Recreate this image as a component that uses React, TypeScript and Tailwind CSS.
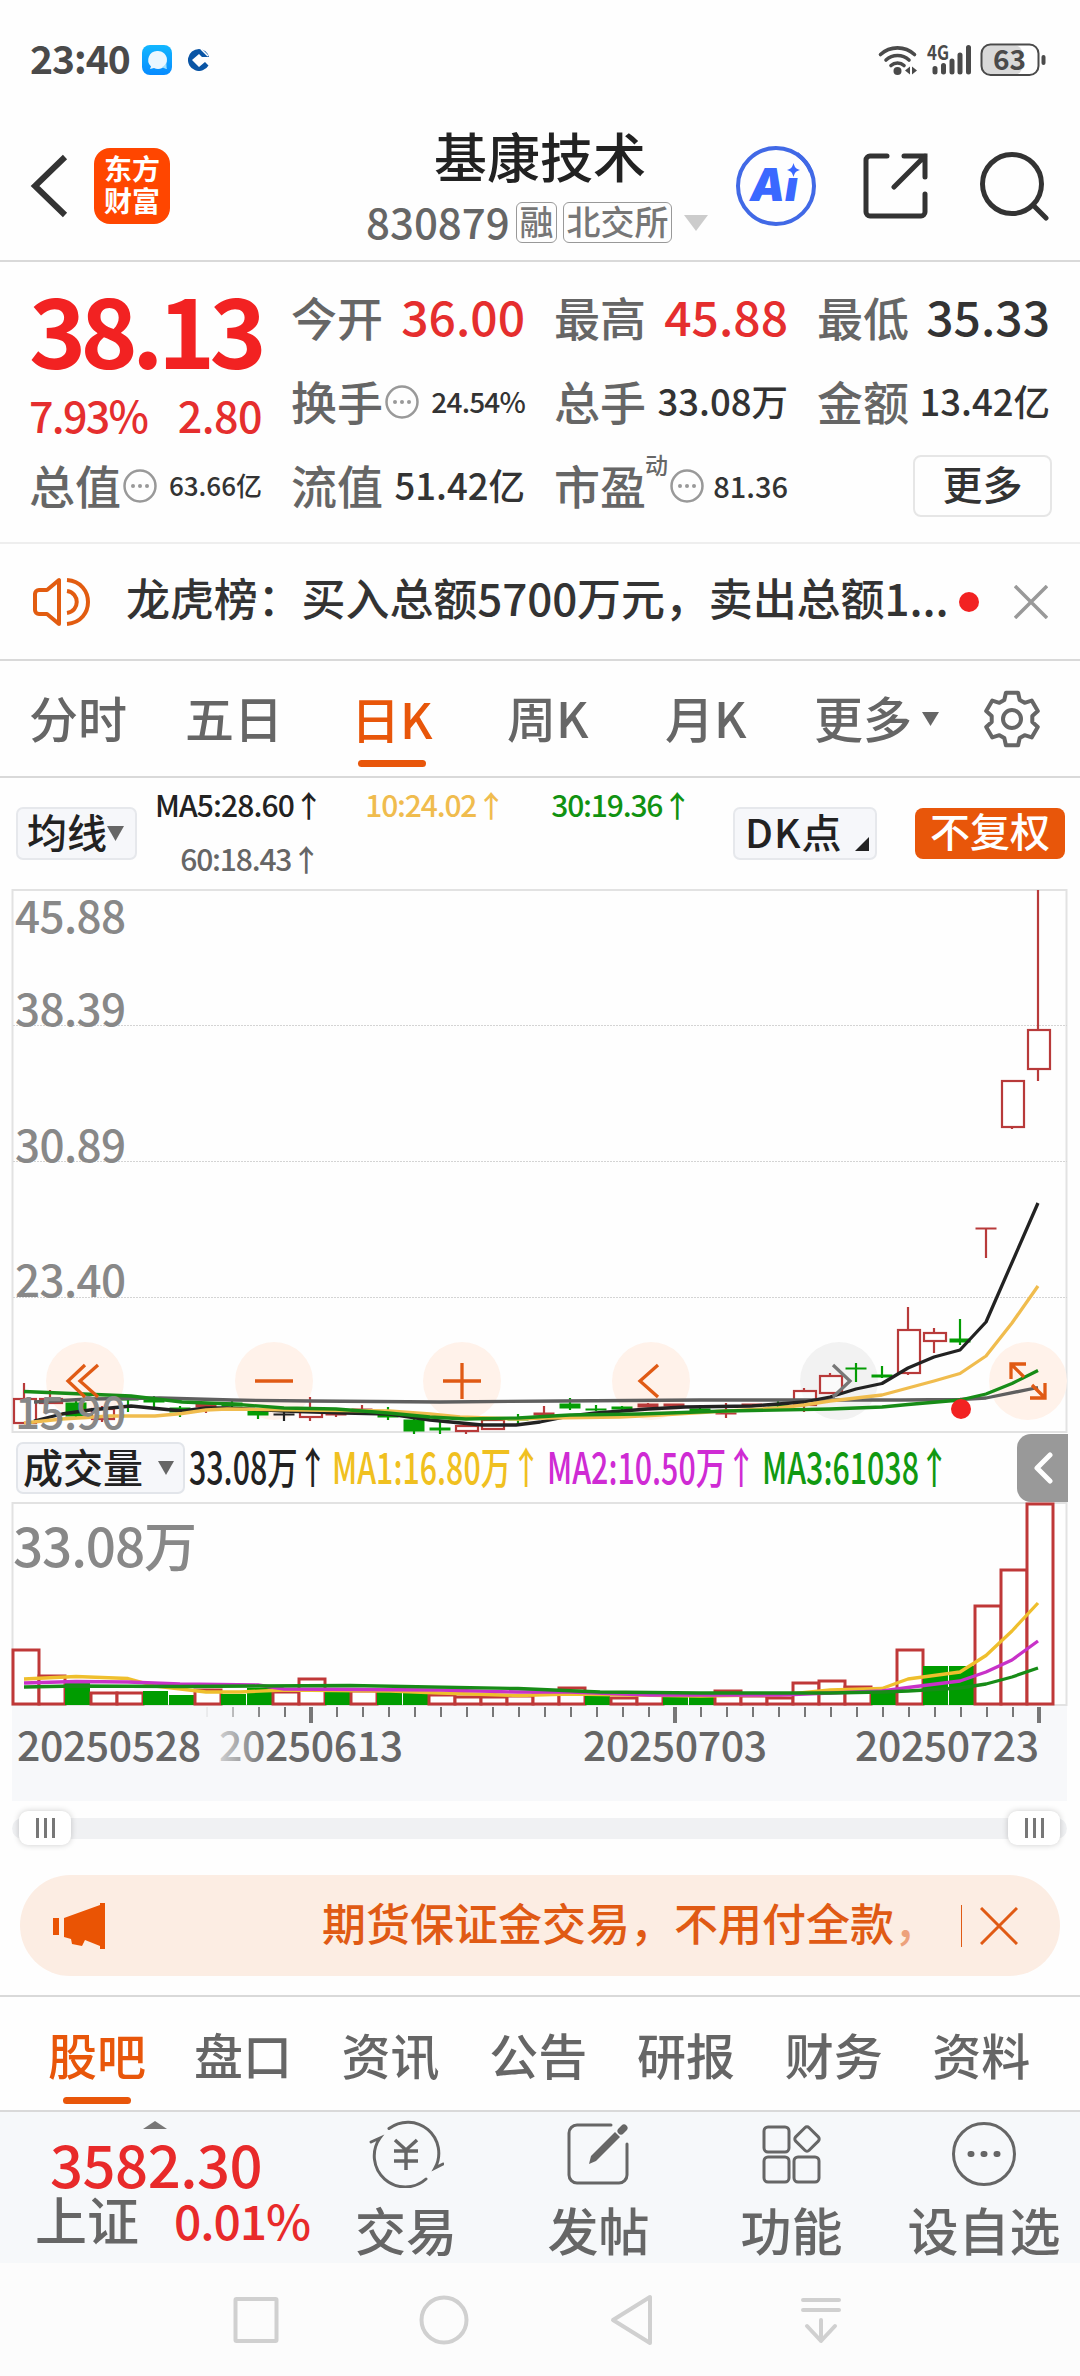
import type { ReactNode } from "react";

type Point = [number, number];

const STEP = 26;
const FIRST_X = 24;
const RED = "#b83a3a";
const GREEN = "#049c04";

// kind, body top, body bottom, wick top, wick bottom
const candles: [string, number, number, number, number][] = [
  ["r", 1399, 1423, 1383, 1423],
  ["r", 1399, 1403, 1390, 1403],
  ["g", 1403, 1416, 1400, 1417],
  ["r", 1409, 1419, 1406, 1422],
  ["g", 1399, 1400, 1397, 1412],
  ["g", 1400, 1402, 1396, 1410],
  ["g", 1408, 1412, 1406, 1417],
  ["r", 1404, 1407, 1402, 1413],
  ["g", 1403, 1406, 1401, 1411],
  ["g", 1411, 1415, 1409, 1419],
  ["k", 1414, 1415, 1409, 1421],
  ["r", 1412, 1417, 1397, 1421],
  ["r", 1414, 1415, 1410, 1417],
  ["r", 1409, 1410, 1405, 1412],
  ["g", 1411, 1417, 1407, 1420],
  ["g", 1420, 1431, 1418, 1436],
  ["g", 1428, 1430, 1421, 1436],
  ["r", 1426, 1431, 1424, 1435],
  ["r", 1420, 1429, 1420, 1429],
  ["g", 1418, 1420, 1414, 1423],
  ["r", 1413, 1415, 1406, 1415],
  ["g", 1404, 1408, 1398, 1410],
  ["g", 1409, 1410, 1405, 1411],
  ["g", 1407, 1409, 1406, 1411],
  ["r", 1404, 1407, 1403, 1407],
  ["r", 1404, 1406, 1404, 1409],
  ["g", 1409, 1411, 1408, 1411],
  ["r", 1413, 1414, 1403, 1418],
  ["r", 1404, 1405, 1404, 1407],
  ["g", 1404, 1406, 1401, 1407],
  ["r", 1391, 1405, 1388, 1412],
  ["r", 1376, 1393, 1373, 1393],
  ["g", 1368, 1369, 1363, 1382],
  ["g", 1375, 1377, 1366, 1378],
  ["r", 1330, 1373, 1307, 1375],
  ["r", 1333, 1341, 1328, 1353],
  ["g", 1339, 1342, 1319, 1345],
  ["r", 1228, 1229, 1228, 1258],
  ["r", 1081, 1127, 1081, 1129],
  ["r", 1030, 1069, 890, 1081],
];

const volumes: [string, number][] = [
  ["r", 1650], ["r", 1676], ["g", 1683], ["r", 1693], ["r", 1693],
  ["g", 1691], ["g", 1695], ["r", 1690], ["g", 1694], ["g", 1688],
  ["r", 1692], ["r", 1679], ["g", 1692], ["r", 1691], ["g", 1692],
  ["g", 1691], ["r", 1695], ["r", 1697], ["r", 1697], ["r", 1696],
  ["r", 1694], ["r", 1688], ["g", 1693], ["r", 1698], ["r", 1694],
  ["g", 1697], ["g", 1696], ["r", 1691], ["r", 1696], ["r", 1698],
  ["r", 1683], ["r", 1681], ["r", 1687], ["g", 1692], ["r", 1650],
  ["g", 1666], ["g", 1666], ["r", 1606], ["r", 1570], ["r", 1504],
];

const priceLines: { color: string; points: Point[] }[] = [
  {
    color: "#5f5f5f",
    points: [[34, 1402], [90, 1399], [160, 1398], [232, 1400], [310, 1401], [440, 1402], [560, 1401], [700, 1400], [900, 1400], [960, 1399.5], [986, 1398], [1038, 1387.5]],
  },
  {
    color: "#222222",
    points: [[34, 1421], [62, 1414], [90, 1410], [131, 1406], [182, 1411], [206, 1408], [227, 1408], [284, 1411], [344, 1413], [389, 1414], [430, 1420], [482, 1425], [516, 1425], [540, 1422], [570, 1416], [596, 1413], [622, 1411], [648, 1409], [685, 1407], [752, 1406], [804, 1402], [830, 1397], [856, 1389], [882, 1383.5], [908, 1368], [934, 1357], [960, 1350], [986, 1322], [1038, 1203]],
  },
  {
    color: "#f0bc4e",
    points: [[24, 1423], [62, 1419], [110, 1416], [155, 1416], [182, 1413.5], [206, 1410], [227, 1409], [300, 1410], [389, 1411], [430, 1414], [460, 1417], [518, 1419], [545, 1418], [620, 1417], [660, 1415], [726, 1411], [778, 1408], [804, 1405], [830, 1401], [882, 1395], [908, 1388], [934, 1381], [960, 1373.5], [986, 1356], [1012, 1323], [1038, 1286]],
  },
  {
    color: "#178c17",
    points: [[24, 1391.5], [131, 1396], [182, 1402], [232, 1404], [284, 1408], [336, 1409], [388, 1413], [430, 1417], [466, 1419], [518, 1418], [570, 1415], [640, 1414], [726, 1411], [830, 1409], [882, 1407], [908, 1404.5], [960, 1400], [986, 1394], [1012, 1383.5], [1038, 1370.5]],
  },
];

const volumeLines: { color: string; points: Point[] }[] = [
  {
    color: "#efbf2d",
    points: [[24, 1679], [76, 1676.5], [128, 1678.5], [155, 1686], [206, 1692], [240, 1692], [284, 1690], [390, 1691], [440, 1693], [518, 1695.5], [570, 1694], [700, 1696], [780, 1695], [830, 1690], [882, 1688.5], [908, 1679], [960, 1672], [986, 1655.5], [1012, 1631], [1038, 1603]],
  },
  {
    color: "#c832c8",
    points: [[24, 1683], [76, 1681.5], [128, 1682], [180, 1684], [258, 1685], [284, 1689], [440, 1690], [518, 1692], [570, 1692], [650, 1695], [780, 1695], [882, 1691], [908, 1687.5], [960, 1681], [986, 1672], [1012, 1660], [1038, 1641]],
  },
  {
    color: "#178c17",
    points: [[24, 1687], [76, 1686], [180, 1686.5], [258, 1686], [350, 1685.5], [518, 1688.5], [600, 1692], [700, 1693], [830, 1693], [882, 1692], [908, 1691], [960, 1688], [986, 1684], [1012, 1677], [1038, 1668]],
  },
];

const toPath = (points: Point[]) => "M" + points.map((p) => p.join(" ")).join("L");

function gearPath() {
  const pts: string[] = [];
  for (let i = 0; i < 6; i++) {
    const steps: Point[] = [[-22, 20.5], [-13, 27], [13, 27], [22, 20.5]];
    for (const [offset, r] of steps) {
      const a = ((i * 60 + offset - 90) * Math.PI) / 180;
      pts.push(`${(30 + r * Math.cos(a)).toFixed(1)} ${(30 + r * Math.sin(a)).toFixed(1)}`);
    }
  }
  return "M" + pts.join("L") + "Z";
}

function Down({ className }: { className: string }) {
  return (
    <svg viewBox="0 0 10 8" preserveAspectRatio="none" className={className} fill="currentColor">
      <path d="M0 0H10L5 8Z" />
    </svg>
  );
}

function Dots() {
  return (
    <svg viewBox="0 0 34 34" className="ml-[2px] h-[34px] w-[34px] shrink-0 text-[#999]" fill="currentColor">
      <circle cx="17" cy="17" r="15.5" fill="none" stroke="currentColor" strokeWidth="2.5" />
      <circle cx="10" cy="17" r="2" />
      <circle cx="17" cy="17" r="2" />
      <circle cx="24" cy="17" r="2" />
    </svg>
  );
}

function StatusBar() {
  return (
    <div className="flex h-[120px] items-center pl-[30px] pr-[33px] text-[#4a4a4a]">
      <span className="pb-[5px] text-[39px] font-bold leading-none tracking-[-1px]">23:40</span>
      <svg viewBox="0 0 30 30" className="ml-3 h-[30px] w-[30px]">
        <defs>
          <linearGradient id="chat" x1="0" y1="0" x2="0" y2="1">
            <stop offset="0" stopColor="#12b7ff" />
            <stop offset="1" stopColor="#078bff" />
          </linearGradient>
        </defs>
        <rect width="30" height="30" rx="8" fill="url(#chat)" />
        <path d="M15 6a9 9 0 0 0-6 15.500L8 24l4-1a9 9 0 1 0 3-17Z" fill="#eaf7ff" />
        <path d="M20 22c2-.5 3.500-2 4-4 1 2 0 4 1 6-2-.2-3-1-5-2Z" fill="#9fe0ff" />
      </svg>
      <svg viewBox="0 0 22 22" className="ml-4 h-[22px] w-[22px]">
        <path d="M11 0a11 11 0 1 0 9.500 16.500L17 13l-6 5-7-7 7-6 3 3h7A11 11 0 0 0 11 0Z" fill="#0a55a5" />
        <path d="M11 8l3 3-3 3-3-3Z" fill="#fff" />
        <path d="M13 0l7 7" stroke="#fff" strokeWidth="1.500" />
      </svg>
      <svg viewBox="0 0 170 34" className="ml-auto h-[34px] w-[170px] overflow-visible" fill="none" stroke="currentColor">
        <g strokeWidth="3.600" strokeLinecap="round">
          <path d="M3.500 11.500a25 25 0 0 1 34 0" />
          <path d="M9 17a17 17 0 0 1 23 0" />
          <path d="M14 22.500a9.500 9.500 0 0 1 13 0" />
        </g>
        <circle cx="20.500" cy="28" r="4" fill="currentColor" stroke="none" />
        <path d="M33 23.500v8l-5-4ZM35 23.500v8l5-4Z" fill="currentColor" stroke="none" />
        <text x="50" y="16.500" fontSize="20" fontWeight="700" fill="currentColor" stroke="none" textLength="22" lengthAdjust="spacingAndGlyphs">
          4G
        </text>
        <g strokeWidth="5" strokeLinecap="round">
          <path d="M58 25.500v3.500M66.500 22.500v6.500M75 18v11M83 12v17M91.500 4.500v24.500" />
        </g>
        <rect x="105" y="2.500" width="40" height="29" rx="7" fill="#d9d9d9" stroke="none" />
        <rect x="104.500" y="1.500" width="57" height="30.500" rx="9" strokeWidth="2" />
        <path d="M166.500 14v6" strokeWidth="4" strokeLinecap="round" />
        <text x="132.500" y="27" fontSize="28" fontWeight="700" textAnchor="middle" fill="currentColor" stroke="none">
          63
        </text>
      </svg>
    </div>
  );
}

function Header() {
  return (
    <header className="flex h-[142px] items-center border-b-2 border-[#d9d9d9] pb-[8px] pl-[28px] text-[#333]">
      <svg viewBox="0 0 40 64" className="h-16 w-10" fill="none" stroke="currentColor" strokeWidth="6" strokeLinecap="butt">
        <path d="M37 3L7 32l30 29" />
      </svg>
      <div className="ml-[26px] flex h-[76px] w-[76px] flex-col items-center justify-center rounded-[16px] bg-[#ff4600] pb-[5px] text-[28px] font-bold leading-[32px] text-white">
        <span>东方</span>
        <span>财富</span>
      </div>
      <div className="ml-[194px] flex w-[346px] shrink-0 flex-col">
        <h1 className="ml-[70px] text-[53px] font-medium leading-[53px] text-[#222]">基康技术</h1>
        <div className="mt-[20px] flex h-[42px] items-center text-[#777]">
          <span className="ml-[2px] w-[150px] pb-1 text-[42px] leading-none text-[#666]">830879</span>
          <span className="flex h-[41px] w-[41px] shrink-0 items-center justify-center rounded-[6px] border-[1.500px] border-[#999] pb-1 text-[34px] leading-none">融</span>
          <span className="ml-[6px] flex h-[41px] w-[109px] shrink-0 items-center justify-center rounded-[6px] border-[1.500px] border-[#999] pb-1 text-[34px] leading-none">北交所</span>
          <Down className="ml-3 h-4 w-6 shrink-0 text-[#ccc]" />
        </div>
      </div>
      <svg viewBox="0 0 82 82" className="ml-[25px] h-[82px] w-[82px] shrink-0">
        <circle cx="41" cy="41" r="38" fill="none" stroke="#4169e6" strokeWidth="4" />
        <text x="15" y="56" fontFamily="Inter" fontWeight="900" fontStyle="italic" fontSize="46" fill="#3a68ff" textLength="48" lengthAdjust="spacingAndGlyphs">
          Ai
        </text>
        <path d="M50 16H66L69 30L66 33H49Z" fill="#fefefe" />
        <path d="M58.500 18c1.200 4.500 2.500 5.800 6.500 7c-4 1.200-5.300 2.500-6.500 7c-1.200-4.500-2.500-5.800-6.500-7c4-1.200 5.300-2.500 6.500-7Z" fill="#3a68ff" />
        <path d="M62 9A38 38 0 0 1 76 27" fill="none" stroke="#4169e6" strokeWidth="4" />
      </svg>
      <svg viewBox="0 0 66 66" className="ml-[46px] h-[66px] w-[66px] shrink-0" fill="none" stroke="currentColor" strokeWidth="5" strokeLinecap="round">
        <path d="M24 3H7a4 4 0 0 0-4 4V59a4 4 0 0 0 4 4H58a4 4 0 0 0 4-4V41" />
        <path d="M41 3H62V24M62 3L31 34" />
      </svg>
      <svg viewBox="0 0 70 70" className="ml-[50px] h-[70px] w-[70px] shrink-0" fill="none" stroke="currentColor" strokeWidth="5" strokeLinecap="round">
        <circle cx="33" cy="33" r="29.500" />
        <path d="M54 54L67 67" />
      </svg>
    </header>
  );
}

function Quote({ label, value, valueClass, extra }: { label: string; value: string; valueClass: string; extra?: ReactNode }) {
  return (
    <div className="flex items-center whitespace-nowrap leading-none">
      <span className="-ml-[1px] pb-[4px] text-[46px] text-[#666]">{label}</span>
      {extra}
      <span className={"ml-auto " + valueClass}>{value}</span>
    </div>
  );
}

function QuotePanel() {
  return (
    <section className="h-[282px] border-b-2 border-[#eee] px-[30px] pt-[14px]">
      <div className="grid grid-cols-[232px_233px_233px_232px] grid-rows-[84px_84px_84px] gap-x-[30px]">
        <div className="row-span-2 flex flex-col leading-none">
          <span className="-ml-[1px] mt-[3px] text-[97px] font-bold leading-[96px] tracking-[-5.700px] text-[#f22222]">38.13</span>
          <div className="mt-[18px] flex justify-between text-[43px] text-[#e52e2e]">
            <span className="-ml-[1px] tracking-[-1.700px]">7.93%</span>
            <span className="tracking-[-0.500px]">2.80</span>
          </div>
        </div>
        <Quote label="今开" value="36.00" valueClass="pb-[6px] text-[48px] text-[#e52e2e]" />
        <Quote label="最高" value="45.88" valueClass="pb-[6px] text-[48px] text-[#e52e2e]" />
        <Quote label="最低" value="35.33" valueClass="pb-[6px] text-[48px] text-[#333]" />
        <Quote label="换手" value="24.54%" valueClass="pb-[2px] text-[28px] tracking-[-0.800px] text-[#333]" extra={<Dots />} />
        <Quote label="总手" value="33.08万" valueClass="pb-[2px] text-[36.500px] text-[#333]" />
        <Quote label="金额" value="13.42亿" valueClass="pb-[2px] text-[36.500px] text-[#333]" />
        <Quote label="总值" value="63.66亿" valueClass="pb-[2px] text-[26px] text-[#333]" extra={<Dots />} />
        <Quote label="流值" value="51.42亿" valueClass="pb-[2px] text-[36.500px] text-[#333]" />
        <Quote
          label="市盈"
          value="81.36"
          valueClass="pb-[2px] text-[29px] text-[#333]"
          extra={
            <>
              <span className="-ml-[1px] self-start pt-[9px] text-[23px] text-[#666]">动</span>
              <Dots />
            </>
          }
        />
        <div className="-mr-[2px] ml-auto mt-[11px] flex h-[62px] w-[139px] items-center justify-center rounded-[8px] border-2 border-[#e6e6e6] pb-[6px] text-[40px] leading-none text-[#333]">
          更多
        </div>
      </div>
    </section>
  );
}

function NewsBar() {
  return (
    <div className="flex h-[117px] items-center border-b-2 border-[#d9d9d9] pl-[32px] text-[#333]">
      <svg viewBox="0 0 60 50" className="h-[50px] w-[60px] shrink-0 text-[#e25c10]" fill="none" stroke="currentColor" strokeWidth="4" strokeLinejoin="round">
        <path d="M27 3v44L15 37H7a4 4 0 0 1-4-4V17a4 4 0 0 1 4-4h8Z" />
        <path d="M35 3c28 2 28 42 0 44M35 14c13 2 13 20 0 22" />
      </svg>
      <span className="ml-[34px] w-[824px] whitespace-nowrap pb-[9px] text-[44px] leading-none tracking-[-0.100px]">龙虎榜：买入总额5700万元，卖出总额1...</span>
      <i className="ml-[9px] h-5 w-5 shrink-0 rounded-full bg-[#f22222]" />
      <svg viewBox="0 0 34 34" className="ml-[35px] h-[34px] w-[34px] shrink-0 text-[#999]" stroke="currentColor" strokeWidth="3.500">
        <path d="M1 1L33 33M33 1L1 33" />
      </svg>
    </div>
  );
}

function PeriodTabs() {
  return (
    <nav className="flex h-[117px] items-center border-b-2 border-[#d9d9d9] pl-[29px] text-[49px] leading-none text-[#666]">
      <span className="w-[156px] pb-[4px]">分时</span>
      <span className="w-[166px] pb-[4px]">五日</span>
      <span className="flex w-[156px] flex-col text-[#e8560a]">
        <span className="pt-[22px]">日K</span>
        <i className="ml-[7px] mt-[18px] h-[7px] w-[68px] rounded-full bg-[#e8560a]" />
      </span>
      <span className="w-[158px] pb-[4px]">周K</span>
      <span className="w-[149px] pb-[4px]">月K</span>
      <span className="pb-[4px]">更多</span>
      <Down className="ml-[10px] h-[14px] w-[17px]" />
      <svg viewBox="0 0 60 60" className="ml-[43px] h-[60px] w-[60px]" fill="none" stroke="currentColor" strokeWidth="4" strokeLinejoin="round">
        <path d={gearPath()} />
        <circle cx="30" cy="30" r="9" />
      </svg>
    </nav>
  );
}

function AverageRow() {
  return (
    <div className="flex h-[110px] items-center whitespace-nowrap pl-[16px] leading-none">
      <div className="flex h-[53px] w-[121px] items-center rounded-[7px] border-2 border-[#e6e8ec] bg-[#f6f7fa] pl-[9px] text-[#222]">
        <span className="pb-1 text-[40px]">均线</span>
        <Down className="h-[15px] w-[17px] text-[#666]" />
      </div>
      <div className="ml-[18px] grid h-[108px] w-[578px] grid-cols-[164px_184px_186px] grid-rows-[54px_54px] items-center text-right text-[30px] tracking-[-1.200px]">
        <span className="pb-1 tracking-[-0.900px] text-[#222]">MA5:28.60↑</span>
        <span className="-mr-[2px] pb-1 text-[#f0bc4e]">10:24.02↑</span>
        <span className="-mr-[2px] pb-1 text-[#119211]">30:19.36↑</span>
        <span className="-mr-[1px] pb-1 text-[#666]">60:18.43↑</span>
      </div>
      <div className="flex h-[53px] w-[144px] items-center justify-between rounded-[7px] border-2 border-[#e6e8ec] bg-[#f6f7fa] pl-[10px] pr-[6px] text-[#222]">
        <span className="pb-1 text-[40px] tracking-[1px]">DK点</span>
        <svg viewBox="0 0 14 14" className="mt-[22px] h-[14px] w-[14px]">
          <path d="M14 0V14H0Z" fill="#222" />
        </svg>
      </div>
      <div className="ml-[38px] flex h-[51px] w-[150px] items-center justify-center rounded-[8px] bg-[#e8560a] pb-[6px] text-[40px] text-white">不复权</div>
    </div>
  );
}

function Candle({ data, index }: { data: [string, number, number, number, number]; index: number }) {
  const [kind, top, bottom, high, low] = data;
  const x = FIRST_X + STEP * index;
  const color = kind === "r" ? RED : kind === "g" ? GREEN : "#222";
  const hollow = kind === "r" && bottom - top > 3;
  return (
    <g stroke={color} strokeWidth="2.200">
      {high < top && <path d={`M${x} ${high}V${top}`} />}
      {low > bottom && <path d={`M${x} ${bottom}V${low}`} />}
      {hollow ? (
        <rect x={x - 10} y={top} width="22" height={bottom - top} fill="#fff" fillOpacity="0.6" />
      ) : (
        <rect x={x - 10} y={top} width="20" height={Math.max(bottom - top, 1)} fill={color} strokeWidth="1" />
      )}
    </g>
  );
}

function PriceChart() {
  const labels: [string, number][] = [["45.88", 933], ["38.39", 1026], ["30.89", 1162], ["23.40", 1297], ["15.90", 1429]];
  const controls: [number, string][] = [
    [85, "M0-16L-17 0L0 16M13-16L-5 0L13 16"],
    [274, "M-19 0H19"],
    [462, "M-19 0H19M0-18V18"],
    [651, "M7-16L-11 0L7 16"],
    [839, "M-6-16L11 0L-6 16"],
    [1028, "M-17-2V-17H-2M-17-17L-4-4M17 2V17H2M17 17L4 4"],
  ];
  return (
    <svg viewBox="0 888 1080 546" className="block h-[546px] w-[1080px]" fill="none">
      <rect x="12.500" y="890" width="1054" height="542" stroke="#e2e2e2" strokeWidth="2" />
      <path d="M13 1025.500H1067M13 1161.500H1067M13 1297.500H1067" stroke="#d4d4d4" strokeDasharray="2 1" />
      {controls.map(([x]) => (
        <circle key={x} cx={x} cy="1381" r="39" fill={x === 839 ? "#f2f2f2" : "#fff2ea"} />
      ))}
      {candles.map((c, i) => (
        <Candle key={i} data={c} index={i} />
      ))}
      {priceLines.map((line) => (
        <path key={line.color} d={toPath(line.points)} stroke={line.color} strokeWidth="3.300" strokeLinejoin="round" />
      ))}
      {labels.map(([text, y]) => (
        <text key={text} x="15" y={y} fontSize="44" fontWeight="500" fill="#888" textLength="111">
          {text}
        </text>
      ))}
      {controls.map(([x, d]) => (
        <path key={x} d={d} transform={`translate(${x} 1381)`} stroke={x === 839 ? "#777" : "#e05a14"} strokeWidth="3.300" />
      ))}
      <circle cx="961" cy="1409" r="10" fill="#f22222" />
    </svg>
  );
}

function VolumeHeader() {
  const items = [
    { text: "33.08万↑", box: "w-[143px] text-[#222]" },
    { text: "MA1:16.80万↑", box: "w-[215px] text-[#f0c020]" },
    { text: "MA2:10.50万↑", box: "w-[215px] text-[#cf2bd4]" },
    { text: "MA3:61038↑", box: "w-[255px] text-[#119911]" },
  ];
  return (
    <div className="flex h-[68px] items-center whitespace-nowrap pl-[16px] leading-none">
      <div className="flex h-[52px] w-[169px] shrink-0 items-center rounded-[7px] border-2 border-[#e2e5ea] bg-[#f6f7fa] pl-[5px] text-[40px] text-[#222]">
        <span className="pb-[5px]">成交量</span>
        <Down className="ml-[15px] h-[14px] w-[16px] text-[#666]" />
      </div>
      <div className="ml-[4px] flex text-[43px]">
        {items.map((item) => (
          <span key={item.text} className={"shrink-0 pb-[6px] " + item.box}>
            <span className="inline-block origin-left scale-x-[0.706]">{item.text}</span>
          </span>
        ))}
      </div>
      <div className="ml-auto mr-[13px] flex h-[68px] w-[51px] shrink-0 items-center justify-center rounded-l-[14px] bg-[#999]">
        <svg viewBox="0 0 20 32" className="h-8 w-5" fill="none" stroke="#fff" strokeWidth="5" strokeLinecap="round" strokeLinejoin="round">
          <path d="M17 3L4 16l13 13" />
        </svg>
      </div>
    </div>
  );
}

function VolumeChart() {
  const dates: [string, number][] = [["20250528", 17], ["20250613", 219], ["20250703", 583], ["20250723", 855]];
  const ticks = Array.from({ length: 33 }, (_, i) => i + 7);
  return (
    <svg viewBox="0 1502 1080 300" className="block h-[300px] w-[1080px]" fill="none">
      <defs>
        <linearGradient id="fade">
          <stop offset="0" stopColor="#f7f8fa" />
          <stop offset="1" stopColor="#f7f8fa" stopOpacity="0" />
        </linearGradient>
      </defs>
      <path d="M12.500 1705V1503H1066.500V1705Z" stroke="#e2e2e2" strokeWidth="2" />
      <rect x="12" y="1706" width="1055" height="95" fill="#f7f8fa" />
      {volumes.map(([kind, top], i) => {
        const x = 12.5 + STEP * i;
        return kind === "r" ? (
          <rect key={i} x={x + 0.5} y={top} width="26" height={1704 - top} stroke="#bf3838" strokeWidth="3" fill="#fff" />
        ) : (
          <rect key={i} x={x + 0.5} y={top} width="25" height={1705 - top} fill="#009c00" />
        );
      })}
      {volumeLines.map((line) => (
        <path key={line.color} d={toPath(line.points)} stroke={line.color} strokeWidth="3.300" strokeLinejoin="round" />
      ))}
      <text x="13" y="1567" fontSize="53" fill="#888" textLength="184" fontWeight="500">
        33.08万
      </text>
      {ticks.map((i) => {
        const major = i === 11 || i === 25 || i === 39;
        return <path key={i} d={`M${25 + STEP * i} 1707v${major ? 16 : 10}`} stroke="#777" strokeWidth={major ? 4 : 2} />;
      })}
      {dates.map(([text, x]) => (
        <text key={text} x={x} y="1761" fontSize="41" fontWeight="500" fill="#666" textLength="184">
          {text}
        </text>
      ))}
      <rect x="200" y="1706" width="70" height="94" fill="url(#fade)" />
    </svg>
  );
}

function Handle() {
  return (
    <div className="flex h-[34px] w-[52px] items-center justify-center gap-[5px] rounded-[9px] bg-white shadow-[0_0_6px_rgba(0,0,0,0.2)]">
      <i className="h-5 w-[3px] bg-[#777]" />
      <i className="h-5 w-[3px] bg-[#777]" />
      <i className="h-5 w-[3px] bg-[#777]" />
    </div>
  );
}

function RangeSlider() {
  return (
    <div className="flex h-[52px] items-center px-[12px]">
      <div className="flex h-[21px] w-[1055px] items-center justify-between rounded-full bg-[#f0f1f3] px-[7px]">
        <Handle />
        <Handle />
      </div>
    </div>
  );
}

function Banner() {
  return (
    <div className="mx-[20px] mt-[21px] flex h-[101px] items-center rounded-full bg-[#fcede3] text-[#e05a14]">
      <svg viewBox="0 0 54 46" className="ml-[32px] h-[46px] w-[54px] shrink-0" fill="#ea5404">
        <path d="M1 15h6v17H1ZM12 15L48 2V0h5v46h-5v-3L33 37l-3 6-10-2-1-5-7-2Z" />
      </svg>
      <span className="ml-[216px] w-[639px] whitespace-nowrap pb-[8px] text-[44px] leading-none">
        期货保证金交易，不用付全款<span className="text-[#eda27c]">，</span>
      </span>
      <i className="h-[42px] w-px shrink-0 bg-[#e05a14]" />
      <svg viewBox="0 0 38 38" className="ml-[18px] h-[38px] w-[38px] shrink-0" stroke="currentColor" strokeWidth="3">
        <path d="M1 1L37 37M37 1L1 37" />
      </svg>
    </div>
  );
}

function InfoTabs() {
  const tabs = ["盘口", "资讯", "公告", "研报", "财务", "资料"];
  return (
    <nav className="mt-[19px] flex h-[117px] border-y-2 border-[#d9d9d9] pl-[48px] pt-[32px] text-[49px] leading-none text-[#666]">
      <div className="w-[147.5px] text-[#e8560a]">
        <div>股吧</div>
        <i className="ml-[15px] mt-[19px] block h-[7px] w-[68px] rounded-full bg-[#e8560a]" />
      </div>
      {tabs.map((tab) => (
        <span key={tab} className="w-[147.7px] shrink-0">
          {tab}
        </span>
      ))}
    </nav>
  );
}

function Action({ label, className, children }: { label: string; className: string; children: ReactNode }) {
  return (
    <div className={"flex shrink-0 flex-col items-center pt-[8px] " + className}>
      <svg viewBox="0 0 76 68" className="h-[68px] w-[76px]" fill="none" stroke="currentColor" strokeWidth="3" strokeLinecap="round">
        {children}
      </svg>
      <span className="mt-[16px] whitespace-nowrap text-[51px] leading-none">{label}</span>
    </div>
  );
}

function BottomBar() {
  return (
    <footer className="flex h-[151px] bg-[#f6f8fa] text-[#666]">
      <div className="w-[310px] shrink-0 whitespace-nowrap pt-[9px] leading-none">
        <svg viewBox="0 0 24 8" className="ml-[143px] h-[8px] w-[24px]">
          <path d="M0 8L12 0L24 8Z" fill="#777" />
        </svg>
        <div className="ml-[50px] mt-[5px] text-[58px] leading-[58px] tracking-[-0.500px] text-[#e82a2a]">3582.30</div>
        <div className="flex items-center pl-[35px]">
          <span className="text-[52px] leading-[54px]">上证</span>
          <span className="ml-[35px] text-[48px] leading-none tracking-[-1.100px] text-[#e82a2a]">0.01%</span>
        </div>
      </div>
      <Action label="交易" className="w-[192px]">
        <path d="M21 8.500A31 31 0 0 1 67 48l8-4M58 59A31 31 0 0 1 12 18l-9 4" />
        <path d="M27 20L38 30L49 20M38 30V50M26 31H50M26 41H50" strokeLinecap="butt" strokeWidth="3.500" />
      </Action>
      <Action label="发帖" className="w-[193px]">
        <path d="M50 5H16a8 8 0 0 0-8 8V55a8 8 0 0 0 8 8H58a8 8 0 0 0 8-8V24" />
        <path d="M28 44L30 36L54 12L59 17L35 41Z" fill="currentColor" stroke="none" />
        <path d="M60 11L63 8" strokeWidth="7" />
      </Action>
      <Action label="功能" className="w-[193px]">
        <rect x="10" y="7" width="25" height="25" rx="4" />
        <rect x="10" y="37" width="25" height="25" rx="4" />
        <rect x="40" y="37" width="25" height="25" rx="4" />
        <rect x="43.500" y="9.500" width="19" height="19" rx="3" transform="rotate(45 53 19)" />
      </Action>
      <Action label="设自选" className="w-[192px]">
        <circle cx="38" cy="34" r="30.500" />
        <path d="M24.500 34h1M37.500 34h1M50.500 34h1" strokeWidth="6" />
      </Action>
    </footer>
  );
}

function SystemNav() {
  return (
    <div className="flex h-[113px] items-center bg-[#fcfcfc] pl-[230px] text-[#d0d0d0]">
      <svg viewBox="0 0 620 60" className="h-[60px] w-[620px]" fill="none" stroke="currentColor" strokeWidth="4" strokeLinejoin="round" strokeLinecap="round">
        <rect x="5.500" y="9" width="41" height="42" rx="1" />
        <circle cx="214" cy="30" r="22.500" />
        <path d="M420 7V53L383 30Z" />
        <path d="M573 10H609M573 20H609M591 30V51M577 36L591 51L605 36" />
      </svg>
    </div>
  );
}

export default function App() {
  return (
    <main className="h-[2376px] w-[1080px] overflow-hidden bg-[#fefefe] font-['Noto_Sans_CJK_SC',sans-serif] font-medium">
      <StatusBar />
      <Header />
      <QuotePanel />
      <NewsBar />
      <PeriodTabs />
      <AverageRow />
      <PriceChart />
      <VolumeHeader />
      <VolumeChart />
      <RangeSlider />
      <Banner />
      <InfoTabs />
      <BottomBar />
      <SystemNav />
    </main>
  );
}
